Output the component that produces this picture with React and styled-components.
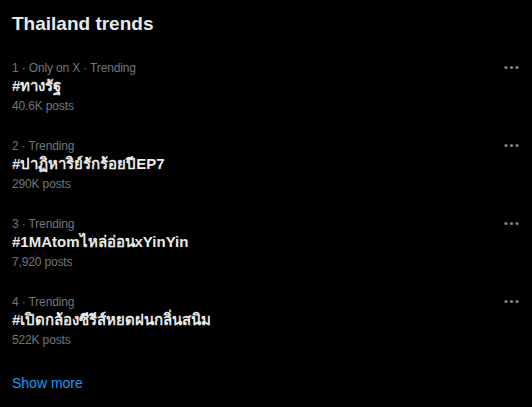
import React from "react";
import styled, { createGlobalStyle } from "styled-components";

const Global = createGlobalStyle`
  html, body { margin: 0; padding: 0; background: #000; }
  body { font-family: "Liberation Sans", "Noto Sans", "DejaVu Sans", sans-serif; color: #e7e9ea; }
`;

const Panel = styled.section`
  width: 532px;
  background: #000;
  display: flex;
  flex-direction: column;
`;

const Title = styled.h2`
  margin: 0;
  padding: 12px 12px;
  font-size: 19px;
  line-height: 24px;
  font-weight: 700;
  color: #e7e9ea;
`;

const Row = styled.div`
  display: flex;
  justify-content: space-between;
  align-items: flex-start;
  padding: 12px 11px 12px 12px;
`;

const Info = styled.div`
  display: flex;
  flex-direction: column;
`;

const Meta = styled.div`
  font-size: 12px;
  line-height: 16px;
  letter-spacing: -0.15px;
  color: #71767b;
  margin-top: ${(p) => p.$gap || 0}px;
`;

const Name = styled.div`
  font-size: 15px;
  line-height: 20px;
  font-weight: 700;
  color: #e7e9ea;
`;

const MoreButton = styled.button`
  background: none;
  border: 0;
  padding: 0;
  margin-top: -2px;
  width: 19px;
  height: 19px;
  color: #80858a;
  display: flex;
  cursor: pointer;
`;

const ShowMore = styled.a`
  display: block;
  padding: 13px 12px 16px;
  font-size: 14px;
  line-height: 20px;
  color: #1d9bf0;
  text-decoration: none;
`;

const Dots = () => (
  <svg width="19" height="19" viewBox="0 0 24 24" fill="currentColor">
    <circle cx="5" cy="12" r="2" />
    <circle cx="12" cy="12" r="2" />
    <circle cx="19" cy="12" r="2" />
  </svg>
);

const trends = [
  { meta: "1 · Only on X · Trending", name: "#ทางรัฐ", posts: "40.6K posts" },
  { meta: "2 · Trending", name: "#ปาฏิหาริย์รักร้อยปีEP7", posts: "290K posts" },
  { meta: "3 · Trending", name: "#1MAtomไหล่อ่อนxYinYin", posts: "7,920 posts" },
  { meta: "4 · Trending", name: "#เปิดกล้องซีรีส์หยดฝนกลิ่นสนิม", posts: "522K posts" },
];

export default function App() {
  return (
    <>
      <Global />
      <Panel>
        <Title>Thailand trends</Title>
        {trends.map((t) => (
          <Row key={t.name}>
            <Info>
              <Meta>{t.meta}</Meta>
              <Name>{t.name}</Name>
              <Meta $gap={2}>{t.posts}</Meta>
            </Info>
            <MoreButton aria-label="More">
              <Dots />
            </MoreButton>
          </Row>
        ))}
        <ShowMore href="#">Show more</ShowMore>
      </Panel>
    </>
  );
}
